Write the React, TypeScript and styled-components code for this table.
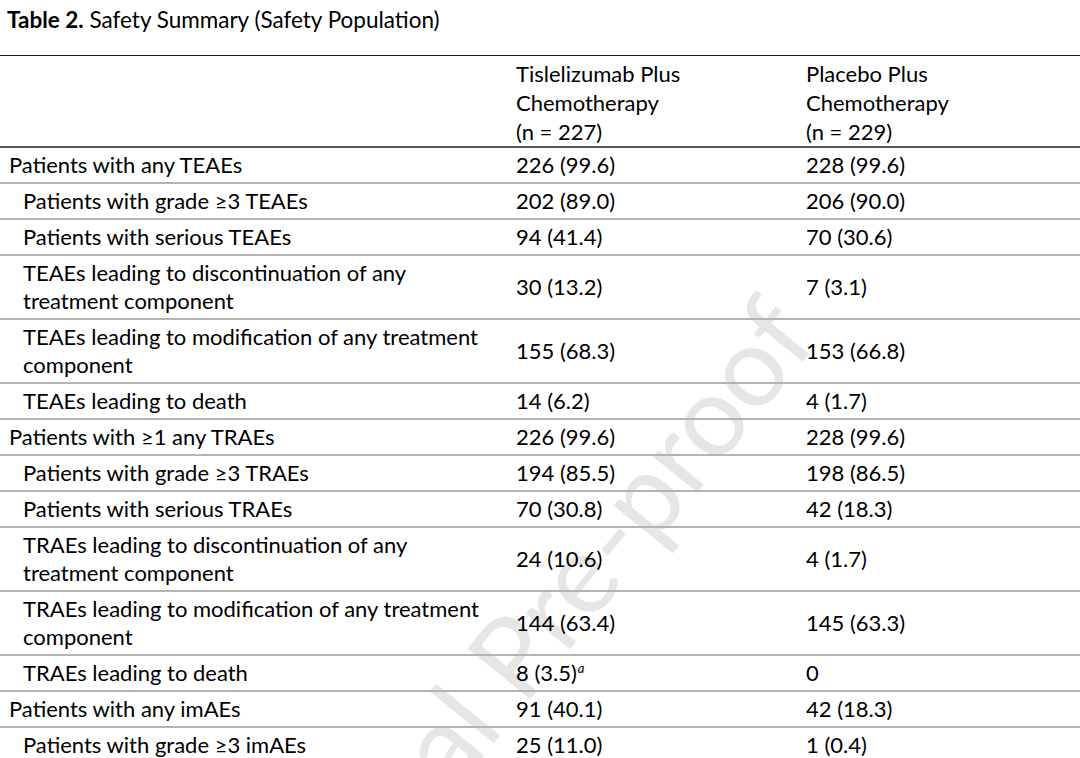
import { Fragment } from 'react'
import styled, { createGlobalStyle } from 'styled-components'

const GlobalStyle = createGlobalStyle`
    html, body {
        margin: 0;
        padding: 0;
        background: #ffffff;
        overflow: hidden;
    }
    body {
        font-family: Lato, "Liberation Sans", sans-serif;
        color: #000000;
    }
`

interface IRow {
    label: string[]
    level: 0 | 1
    a: string
    b: string
    note?: string
}

const rows: IRow[] = [
    { label: ['Patients with any TEAEs'], level: 0, a: '226 (99.6)', b: '228 (99.6)' },
    { label: ['Patients with grade ≥3 TEAEs'], level: 1, a: '202 (89.0)', b: '206 (90.0)' },
    { label: ['Patients with serious TEAEs'], level: 1, a: '94 (41.4)', b: '70 (30.6)' },
    { label: ['TEAEs leading to discontinuation of any', 'treatment component'], level: 1, a: '30 (13.2)', b: '7 (3.1)' },
    { label: ['TEAEs leading to modification of any treatment', 'component'], level: 1, a: '155 (68.3)', b: '153 (66.8)' },
    { label: ['TEAEs leading to death'], level: 1, a: '14 (6.2)', b: '4 (1.7)' },
    { label: ['Patients with ≥1 any TRAEs'], level: 0, a: '226 (99.6)', b: '228 (99.6)' },
    { label: ['Patients with grade ≥3 TRAEs'], level: 1, a: '194 (85.5)', b: '198 (86.5)' },
    { label: ['Patients with serious TRAEs'], level: 1, a: '70 (30.8)', b: '42 (18.3)' },
    { label: ['TRAEs leading to discontinuation of any', 'treatment component'], level: 1, a: '24 (10.6)', b: '4 (1.7)' },
    { label: ['TRAEs leading to modification of any treatment', 'component'], level: 1, a: '144 (63.4)', b: '145 (63.3)' },
    { label: ['TRAEs leading to death'], level: 1, a: '8 (3.5)', b: '0', note: 'a' },
    { label: ['Patients with any imAEs'], level: 0, a: '91 (40.1)', b: '42 (18.3)' },
    { label: ['Patients with grade ≥3 imAEs'], level: 1, a: '25 (11.0)', b: '1 (0.4)' },
]

const Page = styled.div`
    position: relative;
    width: 1080px;
    height: 758px;
    overflow: hidden;
`

const Watermark = styled.div`
    position: absolute;
    left: 204px;
    top: 944px;
    transform-origin: 0 0;
    transform: rotate(-51deg);
    font-family: Lato, "Liberation Sans", sans-serif;
    font-size: 112px;
    line-height: 1;
    white-space: nowrap;
    color: #e6e6e6;
    z-index: 0;
    pointer-events: none;
`

const Content = styled.div`
    position: relative;
    z-index: 1;
`

const Caption = styled.div`
    padding: 5px 0 0 7px;
    height: 55px;
    box-sizing: border-box;
    font-size: 22.5px;
    line-height: 30px;

    b {
        font-weight: 700;
    }
`

const Table = styled.table`
    width: 1080px;
    border-collapse: collapse;
    table-layout: fixed;
    font-size: 22px;
    border-top: 1.5px solid #1a1a1a;
`

const HeadCell = styled.th`
    text-align: left;
    font-weight: 400;
    vertical-align: top;
    padding: 3px 0 0 9px;
    line-height: 29px;
    border-bottom: 2px solid #555555;
`

const Row = styled.tr`
    border-bottom: 2px solid #b4b4b4;
`

const LabelCell = styled.td<{ $level: number }>`
    padding: 3px 0 3px ${p => 9 + p.$level * 14}px;
    line-height: 28px;
    vertical-align: middle;
    white-space: nowrap;
`

const ValueCell = styled.td`
    padding: 3px 0 3px 9px;
    line-height: 28px;
    vertical-align: middle;
    white-space: nowrap;
`

const Note = styled.sup`
    font-style: italic;
    font-size: 13px;
    line-height: 0;
    vertical-align: 8px;
    margin-left: 1px;
`

export default function App() {
    return (
        <Page>
            <GlobalStyle />
            <Watermark>Journal Pre-proof</Watermark>
            <Content>
                <Caption>
                    <b>Table 2.</b> Safety Summary (Safety Population)
                </Caption>
                <Table>
                    <colgroup>
                        <col style={{ width: 507 }} />
                        <col style={{ width: 290 }} />
                        <col style={{ width: 283 }} />
                    </colgroup>
                    <thead>
                        <tr>
                            <HeadCell />
                            <HeadCell>
                                Tislelizumab Plus<br />Chemotherapy<br />(n = 227)
                            </HeadCell>
                            <HeadCell>
                                Placebo Plus<br />Chemotherapy<br />(n = 229)
                            </HeadCell>
                        </tr>
                    </thead>
                    <tbody>
                        {rows.map((r, i) => (
                            <Row key={i}>
                                <LabelCell $level={r.level}>
                                    {r.label.map((line, j) => (
                                        <Fragment key={j}>
                                            {j > 0 && <br />}
                                            {line}
                                        </Fragment>
                                    ))}
                                </LabelCell>
                                <ValueCell>
                                    {r.a}
                                    {r.note && <Note>{r.note}</Note>}
                                </ValueCell>
                                <ValueCell>{r.b}</ValueCell>
                            </Row>
                        ))}
                    </tbody>
                </Table>
            </Content>
        </Page>
    )
}
